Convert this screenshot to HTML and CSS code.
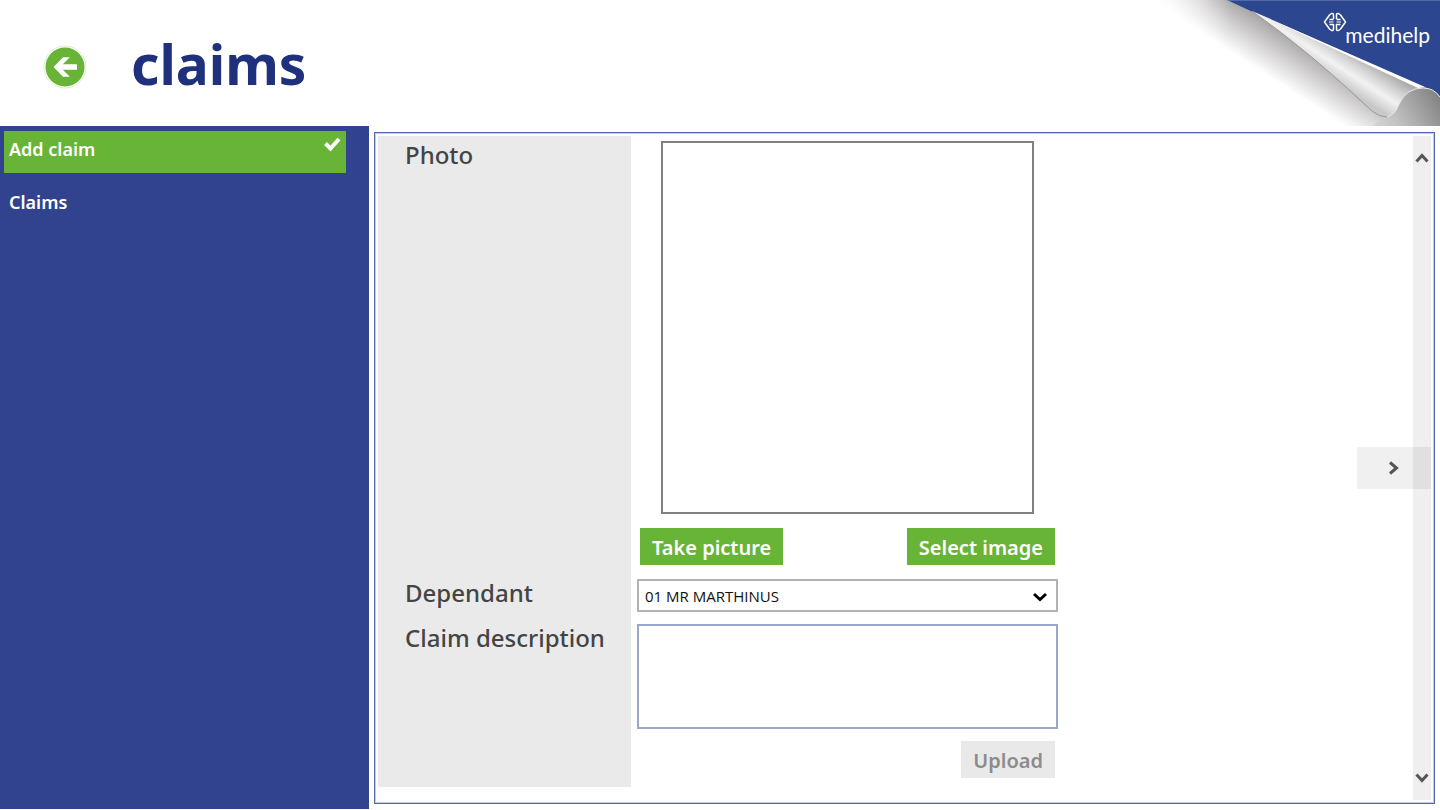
FILE: index.html
```html
<!DOCTYPE html>
<html lang="en">
<head>
  <meta charset="UTF-8" />
  <title>Claims</title>
  <link rel="stylesheet" href="styles.css">
</head>
<body>
  <header class="header">
    <button class="back-btn" type="button" aria-label="Back">
      <svg width="44" height="44" viewBox="0 0 44 44">
        <circle cx="22" cy="22" r="21" fill="none" stroke="#dcefcf" />
        <circle cx="22" cy="22" r="19.5" fill="#68b437" />
        <path d="M10.500 22L20 12.300H26.800L19.800 19.300H34V24.700H19.800L26.800 31.700H20Z" fill="#fff" />
      </svg>
    </button>
    <h1>claims</h1>

    <!-- page curl with the logo in the corner -->
    <div class="corner">
      <svg class="curl" width="290" height="126" viewBox="0 0 290 126">
        <defs>
          <linearGradient id="shadow" gradientUnits="userSpaceOnUse" x1="107" y1="69" x2="131" y2="32">
            <stop offset="0" stop-color="#fff" />
            <stop offset="0.5" stop-color="#d6d4d5" />
            <stop offset="1" stop-color="#aaa8a9" />
          </linearGradient>
          <linearGradient id="fade" x1="0" y1="0" x2="1" y2="0">
            <stop offset="0" stop-color="#fff" />
            <stop offset="1" stop-color="#fff" stop-opacity="0" />
          </linearGradient>
          <linearGradient id="fold" gradientUnits="userSpaceOnUse" x1="232" y1="112" x2="252" y2="81">
            <stop offset="0" stop-color="#c8c8c8" />
            <stop offset="0.4" stop-color="#f2f2f2" />
            <stop offset="0.65" stop-color="#d8d8d8" />
            <stop offset="1" stop-color="#acacac" />
          </linearGradient>
          <linearGradient id="end" gradientUnits="userSpaceOnUse" x1="218" y1="132" x2="284" y2="92">
            <stop offset="0" stop-color="#dddcdc" />
            <stop offset="0.4" stop-color="#c2c1c1" />
            <stop offset="1" stop-color="#858585" />
          </linearGradient>
        </defs>
        <path d="M1 0H78L105 12L240 112V126H195Z" fill="url(#shadow)" />
        <path d="M0 0H80V50H0Z" fill="url(#fade)" />
        <path d="M77 0H290V97Q283 88 272 87L105 13Z" fill="#2c478f" />
        <path d="M222 126L236 117Q244 115 248 104Q256 88 273 88Q285 88 290 97V126Z" fill="url(#end)" />
        <path d="M102 11L276 88Q256 88 249 105Q244 117 236 117Q229 117 222 111Q160 52 102 11Z" fill="url(#fold)" />
        <path d="M102 11L275 87L268 88Z" fill="#fff" />
        <path d="M102 11Q160 52 222 111Q229 117 237 117" fill="none" stroke="#9a9a9a" />
        <path d="M237 117Q245 115 249 104Q256 88 273 88Q284 88 290 97" fill="none" stroke="#e4e4e4" />
        <path d="M77 0H290" stroke="#7b8abd" />
      </svg>
      <div class="logo">
        <svg class="logo-mark" width="24" height="20" viewBox="0 0 24 20" fill="none" stroke="#fff" stroke-width="1.500" stroke-linejoin="round">
          <path d="M10.500 7V3Q10.500 1 8.500 1.500L6.500 3L1.500 10L6.500 17L8.500 18.500Q10.500 19 10.500 17V12.500H6.500M10.500 7.500H6.500" />
          <path d="M13.500 7V3Q13.500 1 15.500 1.500L17.500 3L22.500 10L17.500 17L15.500 18.500Q13.500 19 13.500 17V12.500H17.500M13.500 7.500H17.500" />
          <path d="M6 10H10.500M13.500 10H18" stroke-width="1" />
        </svg>
        <span class="logo-text">medihelp</span>
      </div>
    </div>
  </header>

  <div class="workspace">
    <nav class="sidebar">
      <a href="#add" class="active">Add claim
        <svg class="tick" width="18" height="16" viewBox="0 0 18 16">
          <path d="M2.500 7.500L7.500 12.500L16 3" fill="none" stroke="#fff" stroke-width="4" />
        </svg>
      </a>
      <a href="#claims">Claims</a>
    </nav>

    <main class="panel">
      <form class="claim-form">
        <div class="label">Photo</div>
        <div class="field">
          <div class="photo"></div>
          <div class="buttons">
            <button class="btn" type="button">Take picture</button>
            <button class="btn" type="button">Select image</button>
          </div>
        </div>

        <label class="label" for="dependant">Dependant</label>
        <div class="field select-field">
          <select id="dependant">
            <option>01 MR MARTHINUS</option>
          </select>
          <svg class="arrow" width="14" height="10" viewBox="0 0 14 10">
            <path d="M1 2L7 7.500L13 2" fill="none" stroke="#000" stroke-width="3" />
          </svg>
        </div>

        <label class="label" for="description">Claim description</label>
        <div class="field">
          <textarea id="description"></textarea>
        </div>

        <div class="label"></div>
        <div class="field">
          <div class="buttons upload">
            <button class="btn" type="submit" disabled>Upload</button>
          </div>
        </div>
      </form>

      <div class="scrollbar">
        <button type="button" aria-label="Scroll up">
          <svg width="14" height="12" viewBox="0 0 14 12">
            <path d="M1.500 9.500L7 3.500L12.500 9.500" fill="none" stroke="#555" stroke-width="3" />
          </svg>
        </button>
        <button type="button" aria-label="Scroll down">
          <svg width="14" height="12" viewBox="0 0 14 12">
            <path d="M1.500 2.500L7 8.500L12.500 2.500" fill="none" stroke="#555" stroke-width="3" />
          </svg>
        </button>
      </div>
      <button class="next-btn" type="button" aria-label="Next">
        <svg width="12" height="14" viewBox="0 0 12 14">
          <path d="M2 1.500L8.500 7L2 12.500" fill="none" stroke="#555" stroke-width="3" />
        </svg>
      </button>
    </main>
  </div>
</body>
</html>
```
FILE: styles.css
```css
* {
  box-sizing: border-box;
}
body {
  font-family: "Noto Sans", sans-serif;
  margin: 0;
  min-height: 100vh;
  display: flex;
  flex-direction: column;
  background-color: #fff;
}
button {
  border: 0;
  padding: 0;
  font-family: inherit;
  cursor: pointer;
}
svg {
  display: block;
}

/* header */
.header {
  position: relative;
  display: flex;
  align-items: center;
  height: 126px;
  padding: 0 0 0 43px;
}
.back-btn {
  background: none;
  margin-top: 8px;
}
h1 {
  margin: 2px 0 0 44px;
  font-size: 55px;
  line-height: 76px;
  font-weight: 700;
  color: #1f317d;
}
.corner {
  position: absolute;
  top: 0;
  right: 0;
}
.logo {
  position: absolute;
  top: 12px;
  right: 10px;
  color: #fff;
}
.logo-text {
  display: block;
  margin: -10px 0 0 22px;
  font-family: Lato, sans-serif;
  font-size: 21px;
  line-height: 26px;
}

/* sidebar */
.workspace {
  flex: 1;
  display: flex;
  padding-bottom: 1px;
}
.sidebar {
  width: 369px;
  padding: 5px 23px 0 4px;
  background-color: #31438f;
}
.sidebar a {
  display: flex;
  justify-content: space-between;
  height: 42px;
  margin-bottom: 11px;
  padding: 5px;
  font-size: 18px;
  line-height: 26px;
  font-weight: 600;
  color: #fff;
  text-decoration: none;
}
.sidebar .active {
  background-color: #68b437;
}

/* claim panel */
.panel {
  position: relative;
  flex: 1;
  display: flex;
  justify-content: space-between;
  margin: 6px 5px 5px;
  padding: 3px;
  border: 1px solid #5468b0;
  box-shadow: inset 0 0 0 1px #c3cae4;
}
.claim-form {
  display: grid;
  grid-template-columns: 253px 421px;
  column-gap: 6px;
  align-content: start;
}
.label {
  padding: 5px 0 0 27px;
  background-color: #eaeaea;
  color: #444;
  font-size: 24px;
  line-height: 28px;
  font-weight: 500;
}
.field {
  padding: 5px 0 7px;
}
.photo {
  width: 373px;
  height: 373px;
  margin: 0 auto 14px;
  border: 2px solid #808080;
}
.buttons {
  display: flex;
  justify-content: space-between;
  padding: 0 3px 2px;
}
.buttons.upload {
  justify-content: flex-end;
}
.btn {
  height: 37px;
  padding: 2px 12px 0;
  background-color: #68b437;
  color: #fff;
  font-size: 20px;
  font-weight: 600;
}
.btn:disabled {
  background-color: #e9e9e9;
  color: #8c8c8c;
}
.select-field {
  position: relative;
}
select {
  display: block;
  width: 100%;
  height: 33px;
  padding: 0 6px;
  border: 2px solid #b2b2b2;
  border-radius: 0;
  appearance: none;
  background-color: #fff;
  color: #111;
  font-family: "Open Sans", sans-serif;
  font-size: 15px;
}
.arrow {
  position: absolute;
  right: 11px;
  top: 18px;
  pointer-events: none;
}
textarea {
  display: block;
  width: 100%;
  height: 105px;
  border: 2px solid #9ba6cd;
  resize: none;
}
.scrollbar {
  display: flex;
  flex-direction: column;
  justify-content: space-between;
  width: 18px;
  padding: 16px 0;
  background-color: #efefef;
}
.scrollbar button {
  display: flex;
  justify-content: center;
  background: none;
}
.next-btn {
  position: absolute;
  right: 3px;
  top: 314px;
  width: 74px;
  height: 42px;
  display: flex;
  align-items: center;
  justify-content: center;
  background-color: rgba(0, 0, 0, 0.06);
}
```
